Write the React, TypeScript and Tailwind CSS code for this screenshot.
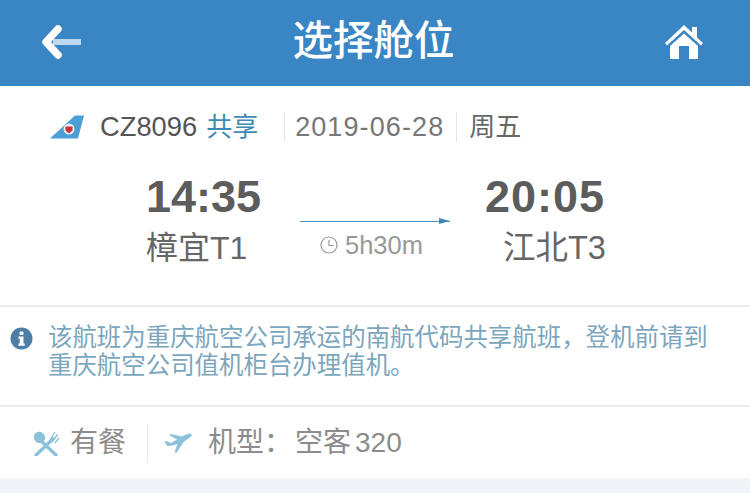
import React from 'react';

const CJK = { fontFamily: '"Liberation Sans","Noto Sans CJK SC",sans-serif' };

function BackIcon() {
  return (
    <svg width="42" height="36" viewBox="0 0 42 36">
      <path d="M40 18H12" stroke="#bcd8ee" strokeWidth="6" strokeLinecap="butt" />
      <path d="M17 5 5 18l12 13" fill="none" stroke="#fff" strokeWidth="7.500" strokeLinecap="round" strokeLinejoin="round" />
    </svg>
  );
}

function HomeIcon() {
  return (
    <svg width="40" height="36" viewBox="0 0 40 36" fill="#fff">
      <path d="M20 1 1 19l2 2.4L20 6l17 15.4 2-2.4-6-5.6V3h-5v5.600z" />
      <path d="M6 22 20 9.500 34 22v13H25V22H15v13H6z" />
      <rect x="16" y="17" width="8" height="3" />
    </svg>
  );
}

function TailLogo() {
  return (
    <svg width="36" height="24" viewBox="0 0 36 24">
      <path d="M26 .5h9l-6 23H1z" fill="#4a9fd6" />
      <circle cx="20" cy="14" r="5.500" fill="#e9eef2" />
      <path d="M16.500 11.500h7v4l-3.500 3-3.500-3z" fill="#c8343d" />
    </svg>
  );
}

function ClockIcon() {
  return (
    <svg width="18" height="18" viewBox="0 0 18 18" fill="none" stroke="#999" strokeWidth="1.2">
      <circle cx="9" cy="9" r="8" />
      <path d="M9 4v5.500h4.500" />
    </svg>
  );
}

function InfoIcon() {
  return (
    <svg width="23" height="23" viewBox="0 0 23 23">
      <circle cx="11.500" cy="11.500" r="11" fill="#4d7fa6" />
      <rect x="9.500" y="4.500" width="4" height="3.500" rx="1" fill="#fff" />
      <path d="M8.500 9.500h5v7h1.200v2.200H8.500v-2.200h1.200v-4.800H8.500z" fill="#fff" />
    </svg>
  );
}

function MealIcon() {
  return (
    <svg width="28" height="26" viewBox="0 0 28 26" fill="none" stroke="#8cc1d9">
      <path d="M8 10 24 25" strokeWidth="3.400" strokeLinecap="round" />
      <ellipse cx="7.500" cy="7.500" rx="5.500" ry="6" transform="rotate(-40 7.500 7.500)" fill="#8cc1d9" stroke="none" />
      <path d="M21 9 4 25" strokeWidth="3.400" strokeLinecap="round" />
      <path d="m18 10 5-8M20.500 11.500l5-7M23 13l4-5" strokeWidth="1.400" />
    </svg>
  );
}

function PlaneIcon() {
  return (
    <svg width="28" height="20" viewBox="0 0 28 20" fill="#8cc1d9">
      <path d="M27 .5C24 .5 20 2 18 3.500L7 1 5 2l8 4.500-6 3.500L2 8 .5 9l3 4c3 0 7-1 10-2l-3 8 2 1 7-11c3-2 6-4 8-6 .500-1 .500-1.500-.500-2z" />
    </svg>
  );
}

export default function App() {
  return (
    <div className="w-[750px] h-[493px] overflow-hidden bg-white flex flex-col" style={CJK}>
      <header className="h-[86px] bg-[#3a86c4] flex items-center justify-between pl-[41px] pr-[46px] pb-[3px] shrink-0">
        <BackIcon />
        <h1 className="text-[40.500px] leading-none font-medium text-white">选择舱位</h1>
        <HomeIcon />
      </header>

      <section className="h-[221px] border-b-2 border-[#ececec] shrink-0">
        <div className="flex items-center h-[32px] mt-[25px] pl-[49px] text-[26px] leading-none text-[#555]">
          <TailLogo />
          <span className="ml-[15px] text-[27.300px]">CZ8096</span>
          <span className="ml-[9px] text-[#3f8ab5]">共享</span>
          <div className="ml-[26px] w-px h-[30px] bg-[#e6e6e6]" />
          <span className="ml-[10px] text-[27px] tracking-[1.100px] text-[#777]">2019-06-28</span>
          <div className="ml-[12px] w-px h-[30px] bg-[#e6e6e6]" />
          <span className="ml-[12px] text-[#666]">周五</span>
        </div>

        <div className="flex mt-[28px] pl-[146px]">
          <div className="w-[154px]">
            <div className="text-[45px] leading-[52px] font-bold text-[#5c5c5c]">14:35</div>
            <div className="mt-[5px] text-[32px] leading-[40px] text-[#666]">樟宜T1</div>
          </div>
          <div className="w-[150px] pt-[50px] flex flex-col items-center">
            <div className="relative w-full h-px bg-[#4b8fb3]">
              <div className="absolute right-0 -top-[3px] w-0 h-0 border-l-[11px] border-l-[#3f8ab5] border-t-[3px] border-t-transparent border-b-[3px] border-b-transparent" />
            </div>
            <div className="flex items-center gap-[7px] mt-[10px] mr-[7px] text-[25.500px] leading-[26px] text-[#999]">
              <ClockIcon />
              <span>5h30m</span>
            </div>
          </div>
          <div className="ml-[35px] w-[124px]">
            <div className="text-[45px] leading-[52px] font-bold tracking-[1px] text-[#5c5c5c]">20:05</div>
            <div className="mt-[5px] text-[32.500px] leading-[40px] text-[#666] pl-[18px] whitespace-nowrap">江北T3</div>
          </div>
        </div>
      </section>

      <section className="h-[100px] border-b-2 border-[#ececec] flex pl-[10px] pr-[30px] pt-[17px] shrink-0">
        <div className="w-[23px] mt-[3px] shrink-0"><InfoIcon /></div>
        <p className="ml-[15px] text-[24.450px] leading-[28px] text-[#7ba6bd]">
          该航班为重庆航空公司承运的南航代码共享航班，登机前请到重庆航空公司值机柜台办理值机。
        </p>
      </section>

      <section className="h-[71px] flex items-center pl-[32px] text-[28px] leading-none text-[#8c8c8c] shrink-0">
        <MealIcon />
        <span className="ml-[10px]">有餐</span>
        <div className="ml-[21px] w-px h-[38px] bg-[#e8e8e8]" />
        <div className="ml-[16px]"><PlaneIcon /></div>
        <span className="ml-[16px]">机型：</span>
        <span className="ml-[3px]">空客</span>
        <span className="ml-[4px]">320</span>
      </section>

      <div className="flex-1 bg-[#f0f4f8]" />
    </div>
  );
}
